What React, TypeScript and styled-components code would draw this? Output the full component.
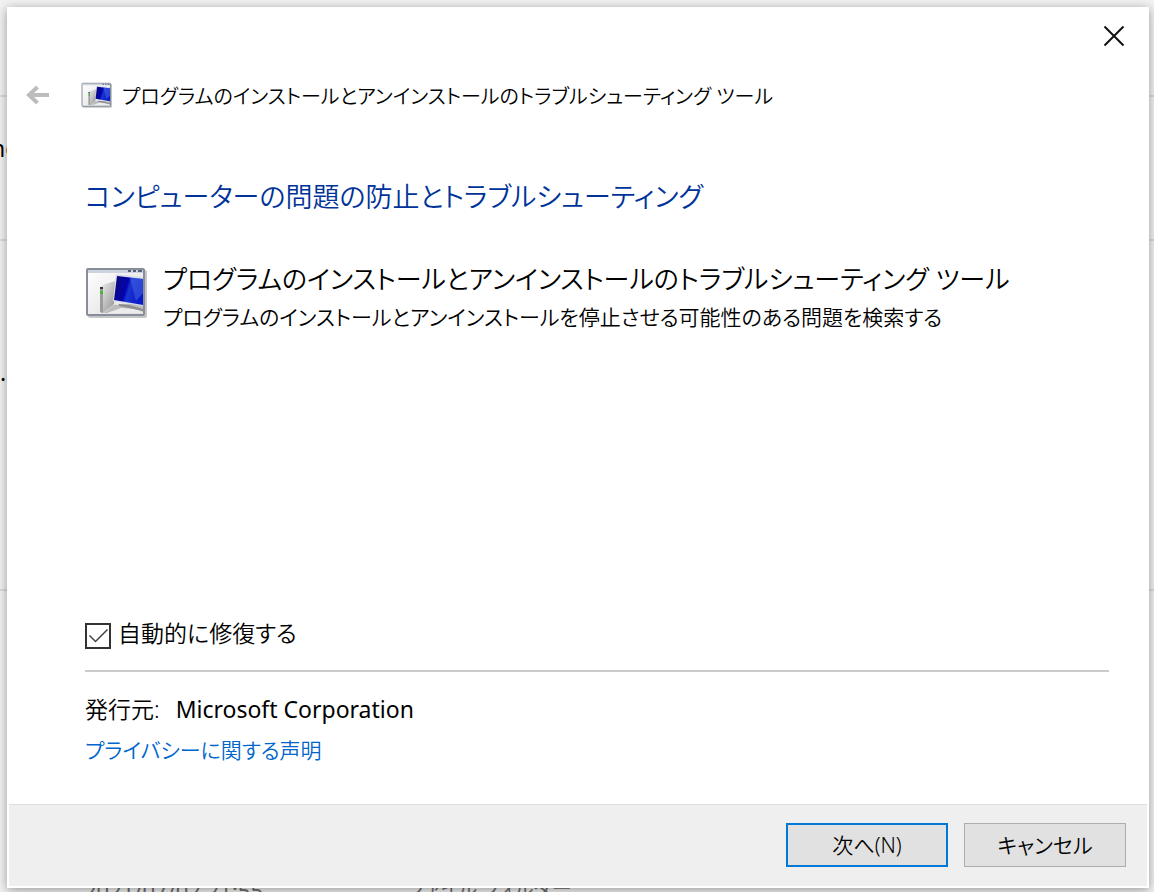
import React from "react";
import styled, { createGlobalStyle } from "styled-components";

const GlobalStyle = createGlobalStyle`
  *, *::before, *::after { box-sizing: border-box; }
  html, body { margin: 0; padding: 0; }
  body {
    background: #f2f2f2;
    color: #000;
    font-family: "Noto Sans", "Noto Sans CJK JP", sans-serif;
    font-size: 21px;
    font-weight: 350;
    font-feature-settings: "palt";
  }
`;

const Desktop = styled.div`
  position: relative;
  display: flex;
  min-height: 100vh;
  padding: 7px 5px 4px 7px;
  overflow: hidden;
`;

const Backdrop = styled.div`
  position: absolute;
  inset: 0;
  overflow: hidden;
`;

const BackdropRule = styled.div<{ $top: number }>`
  position: absolute;
  top: ${(p) => p.$top}px;
  left: 0;
  right: 0;
  height: 2px;
  background: #dcdcdc;
`;

const BackdropText = styled.span<{ $left: number; $top: number; $size?: number; $muted?: boolean }>`
  position: absolute;
  top: ${(p) => p.$top}px;
  left: ${(p) => p.$left}px;
  font-size: ${(p) => p.$size ?? 23}px;
  line-height: 32px;
  font-weight: 400;
  white-space: nowrap;
  color: ${(p) => (p.$muted ? "#6d6d6d" : "#000")};
`;

const Dialog = styled.main`
  position: relative;
  flex: 1;
  min-width: 0;
  display: flex;
  flex-direction: column;
  padding: 0 2px 2px;
  background: #fff;
  box-shadow: 0 2px 10px rgba(0, 0, 0, 0.38);
`;

const TitleBar = styled.div`
  display: flex;
  justify-content: flex-end;
  padding: 8px 12px 0 0;
`;

const IconButton = styled.button`
  display: flex;
  align-items: center;
  justify-content: center;
  width: 42px;
  height: 42px;
  padding: 0;
  border: 0;
  background: none;
`;

const Header = styled.header`
  display: flex;
  align-items: center;
  height: 76px;
  padding-left: 8px;
`;

const HeaderTitle = styled.h1`
  margin: 0;
  padding: 3px 0 0 10px;
  font-size: 20px;
  line-height: 32px;
  font-weight: inherit;
  white-space: nowrap;
`;

const HeaderIcon = styled.span`
  display: flex;
  margin-left: 22px;
`;

const Content = styled.section`
  flex: 1;
  display: flex;
  flex-direction: column;
  padding: 42px 38px 38px 76px;
`;

const Heading = styled.h2`
  margin: 0;
  font-size: 27px;
  line-height: 44px;
  font-weight: inherit;
  color: #003399;
  white-space: nowrap;
`;

const Tool = styled.div`
  display: flex;
  gap: 16px;
  padding-top: 38px;
`;

const ToolIcon = styled.span`
  display: flex;
  padding-top: 10px;
`;

const ToolName = styled.h3`
  margin: 0;
  font-size: 26px;
  line-height: 44px;
  font-weight: inherit;
  white-space: nowrap;
`;

const ToolDescription = styled.p`
  margin: 0;
  font-size: 21px;
  line-height: 32px;
  white-space: nowrap;
`;

const RepairOption = styled.label`
  display: flex;
  align-items: flex-end;
  gap: 7px;
  margin-top: auto;
  padding-bottom: 21px;
  font-size: 23px;
  line-height: 32px;
`;

const CheckSlot = styled.span`
  position: relative;
  display: flex;
  width: 26px;
  height: 26px;
  svg {
    position: absolute;
    inset: 0;
    pointer-events: none;
  }
  input:not(:checked) + svg {
    display: none;
  }
`;

const CheckBox = styled.input`
  appearance: none;
  width: 26px;
  height: 26px;
  margin: 0;
  border: 2px solid #333;
  background: #fff;
`;

const Publisher = styled.p`
  display: flex;
  gap: 16px;
  margin: 0;
  padding-top: 21px;
  border-top: 2px solid #cbcbcb;
  font-size: 23px;
  line-height: 32px;
`;

const PublisherName = styled.span`
  font-weight: 400;
`;

const PrivacyLink = styled.a`
  align-self: flex-start;
  margin-top: 9px;
  font-size: 21px;
  line-height: 32px;
  color: #0066cc;
  text-decoration: none;
`;

const Footer = styled.footer`
  display: flex;
  justify-content: flex-end;
  gap: 16px;
  padding: 18px 21px 19px;
  border-top: 1px solid #dfdfdf;
  background: #efefef;
`;

const PushButton = styled.button<{ $primary?: boolean }>`
  width: 162px;
  height: 44px;
  padding: 0;
  border: ${(p) => (p.$primary ? "2px solid #0078d7" : "1px solid #adadad")};
  background: #e1e1e1;
  color: #000;
  font-family: inherit;
  font-feature-settings: inherit;
  font-size: 21px;
  line-height: 32px;
  font-weight: inherit;
`;

function ComputerIcon({ id, width, height }: { id: string; width: number; height: number }) {
  const ref = (name: string) => `url(#${id}-${name})`;
  return (
    <svg width={width} height={height} viewBox="0 0 62 51" aria-hidden="true">
      <defs>
        <linearGradient id={`${id}-pane`} x1="0" y1="0" x2="1" y2="1">
          <stop offset="0" stopColor="#ffffff" />
          <stop offset="1" stopColor="#dcdcde" />
        </linearGradient>
        <linearGradient id={`${id}-screen`} x1="0" y1="0" x2="1" y2="0.3">
          <stop offset="0" stopColor="#0a0a70" />
          <stop offset="0.5" stopColor="#0404b0" />
          <stop offset="0.6" stopColor="#1a34d0" />
          <stop offset="1" stopColor="#0a1cc8" />
        </linearGradient>
        <linearGradient id={`${id}-case`} x1="0" y1="0" x2="1" y2="1">
          <stop offset="0" stopColor="#f0f0f0" />
          <stop offset="0.5" stopColor="#c0c0c0" />
          <stop offset="1" stopColor="#8a8a8a" />
        </linearGradient>
      </defs>
      <rect x="3" y="3" width="59" height="48" rx="2" fill="#c4c6c8" />
      <rect x="2" y="2" width="57" height="46" rx="1" fill={ref("pane")} stroke="#878e99" strokeWidth="2" />
      <rect x="3" y="3" width="55" height="3" fill="#ccd3dd" />
      <path d="M43 4h3M48 4h3M53 4h4" stroke="#53627a" strokeWidth="2" />
      <path d="M15 20l5-3 11-3-2 23-11 9-3-1z" fill={ref("case")} />
      <path d="M15 20h3v26l-3-1z" fill="#9a9d9a" />
      <path d="M15 20h3v2h-3z" fill="#333" />
      <path d="M15 24h3v3h-3z" fill="#48b72c" />
      <path d="M19 46l9-8 14-1 16-2v11H19z" fill="#bcbcbc" />
      <path d="M22 46l14-5 14 1 8 3v1z" fill="#ececec" />
      <path d="M34 37l10 1 14 4v2l-14-3-10-2z" fill="#8d8d8d" />
      <path d="M31 7l27 3v29l-30-5z" fill="#d9deea" />
      <path d="M32 9l26 3v26l-29-5z" fill={ref("screen")} />
      <path d="M45 11l13 1v14l-7 8z" fill="#4a6ce6" opacity="0.5" />
    </svg>
  );
}

export default function App() {
  return (
    <>
      <GlobalStyle />
      <Desktop>
        <Backdrop aria-hidden="true">
          <BackdropRule $top={95} />
          <BackdropRule $top={239} />
          <BackdropRule $top={589} />
          <BackdropText $left={-9} $top={132}>ne</BackdropText>
          <BackdropText $left={0} $top={356}>.</BackdropText>
          <BackdropText $left={84} $top={874} $size={22} $muted>2021/07/02 21:55</BackdropText>
          <BackdropText $left={408} $top={873} $size={20} $muted>ファイル フォルダー</BackdropText>
        </Backdrop>
        <Dialog>
          <TitleBar>
            <IconButton type="button" aria-label="閉じる">
              <svg width="22" height="22" viewBox="0 0 22 22" aria-hidden="true">
                <path d="M1.5 1.5l19 19M20.500 1.500l-19 19" stroke="#111" strokeWidth="2" fill="none" />
              </svg>
            </IconButton>
          </TitleBar>
          <Header>
            <IconButton type="button" aria-label="戻る">
              <svg width="24" height="20" viewBox="0 0 24 20" aria-hidden="true">
                <path d="M23 10H3M11.500 2L3 10l8.500 8" stroke="#bdbdbd" strokeWidth="4" fill="none" />
              </svg>
            </IconButton>
            <HeaderIcon>
              <ComputerIcon id="small" width={31} height={26} />
            </HeaderIcon>
            <HeaderTitle>プログラムのインストールとアンインストールのトラブルシューティング ツール</HeaderTitle>
          </Header>
          <Content>
            <Heading>コンピューターの問題の防止とトラブルシューティング</Heading>
            <Tool>
              <ToolIcon>
                <ComputerIcon id="large" width={62} height={51} />
              </ToolIcon>
              <div>
                <ToolName>プログラムのインストールとアンインストールのトラブルシューティング ツール</ToolName>
                <ToolDescription>プログラムのインストールとアンインストールを停止させる可能性のある問題を検索する</ToolDescription>
              </div>
            </Tool>
            <RepairOption>
              <CheckSlot>
                <CheckBox type="checkbox" defaultChecked />
                <svg width="26" height="26" viewBox="0 0 26 26" aria-hidden="true">
                  <path d="M4.500 12.500l6 6L22.500 6.500" stroke="#444" strokeWidth="1.500" fill="none" />
                </svg>
              </CheckSlot>
              自動的に修復する
            </RepairOption>
            <Publisher>
              <span>発行元:</span>
              <PublisherName>Microsoft Corporation</PublisherName>
            </Publisher>
            <PrivacyLink href="#privacy">プライバシーに関する声明</PrivacyLink>
          </Content>
          <Footer>
            <PushButton type="button" $primary>次へ(N)</PushButton>
            <PushButton type="button">キャンセル</PushButton>
          </Footer>
        </Dialog>
      </Desktop>
    </>
  );
}
